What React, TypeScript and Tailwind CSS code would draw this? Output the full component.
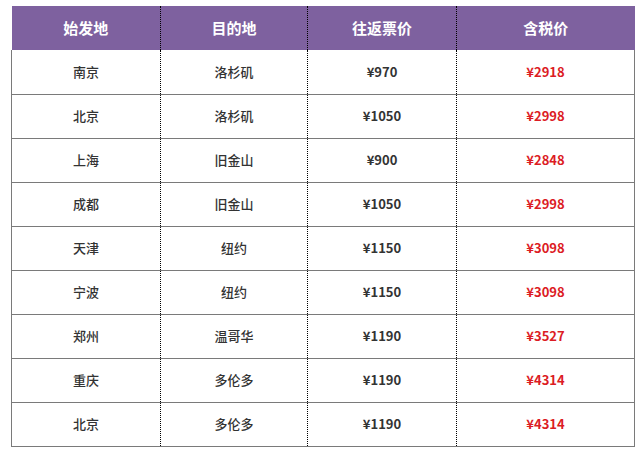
const rows = [
  ['南京', '洛杉矶', '¥970', '¥2918'],
  ['北京', '洛杉矶', '¥1050', '¥2998'],
  ['上海', '旧金山', '¥900', '¥2848'],
  ['成都', '旧金山', '¥1050', '¥2998'],
  ['天津', '纽约', '¥1150', '¥3098'],
  ['宁波', '纽约', '¥1150', '¥3098'],
  ['郑州', '温哥华', '¥1190', '¥3527'],
  ['重庆', '多伦多', '¥1190', '¥4314'],
  ['北京', '多伦多', '¥1190', '¥4314'],
];

const headers = ['始发地', '目的地', '往返票价', '含税价'];
const widths = ['w-[149px]', 'w-[147px]', 'w-[149px]', 'w-[178px]'];

export default function App() {
  return (
    <div
      className="w-[636px] h-[458px] bg-white pl-[11px] pt-[6px]"
      style={{ fontFamily: '"Noto Sans CJK SC", "Noto Sans", sans-serif' }}
    >
      <table className="w-[623px] border-collapse table-fixed">
        <thead>
          <tr className="h-[44px] bg-[#7e619f]">
            {headers.map((h, i) => (
              <th
                key={h}
                className={`${widths[i]} p-0 text-center text-[15px] font-bold text-white ${
                  i < 3 ? 'border-r border-r-black [border-right-style:dotted]!' : ''
                }`}
              >
                {h}
              </th>
            ))}
          </tr>
        </thead>
        <tbody>
          {rows.map((r, ri) => (
            <tr key={ri} className="h-[44px]">
              {r.map((c, ci) => (
                <td
                  key={ci}
                  className={`p-0 text-center text-[13px] border-b border-b-[#7a7a7a] ${
                    ci === 0 ? 'border-l border-l-[#7a7a7a]' : ''
                  } ${
                    ci < 3
                      ? 'border-r border-r-black [border-right-style:dotted]!'
                      : 'border-r border-r-[#7a7a7a]'
                  } ${ci >= 2 ? 'font-bold' : 'font-medium'} ${
                    ci === 3 ? 'text-[#dc1c24]' : 'text-[#333]'
                  }`}
                >
                  {c}
                </td>
              ))}
            </tr>
          ))}
        </tbody>
      </table>
    </div>
  );
}
